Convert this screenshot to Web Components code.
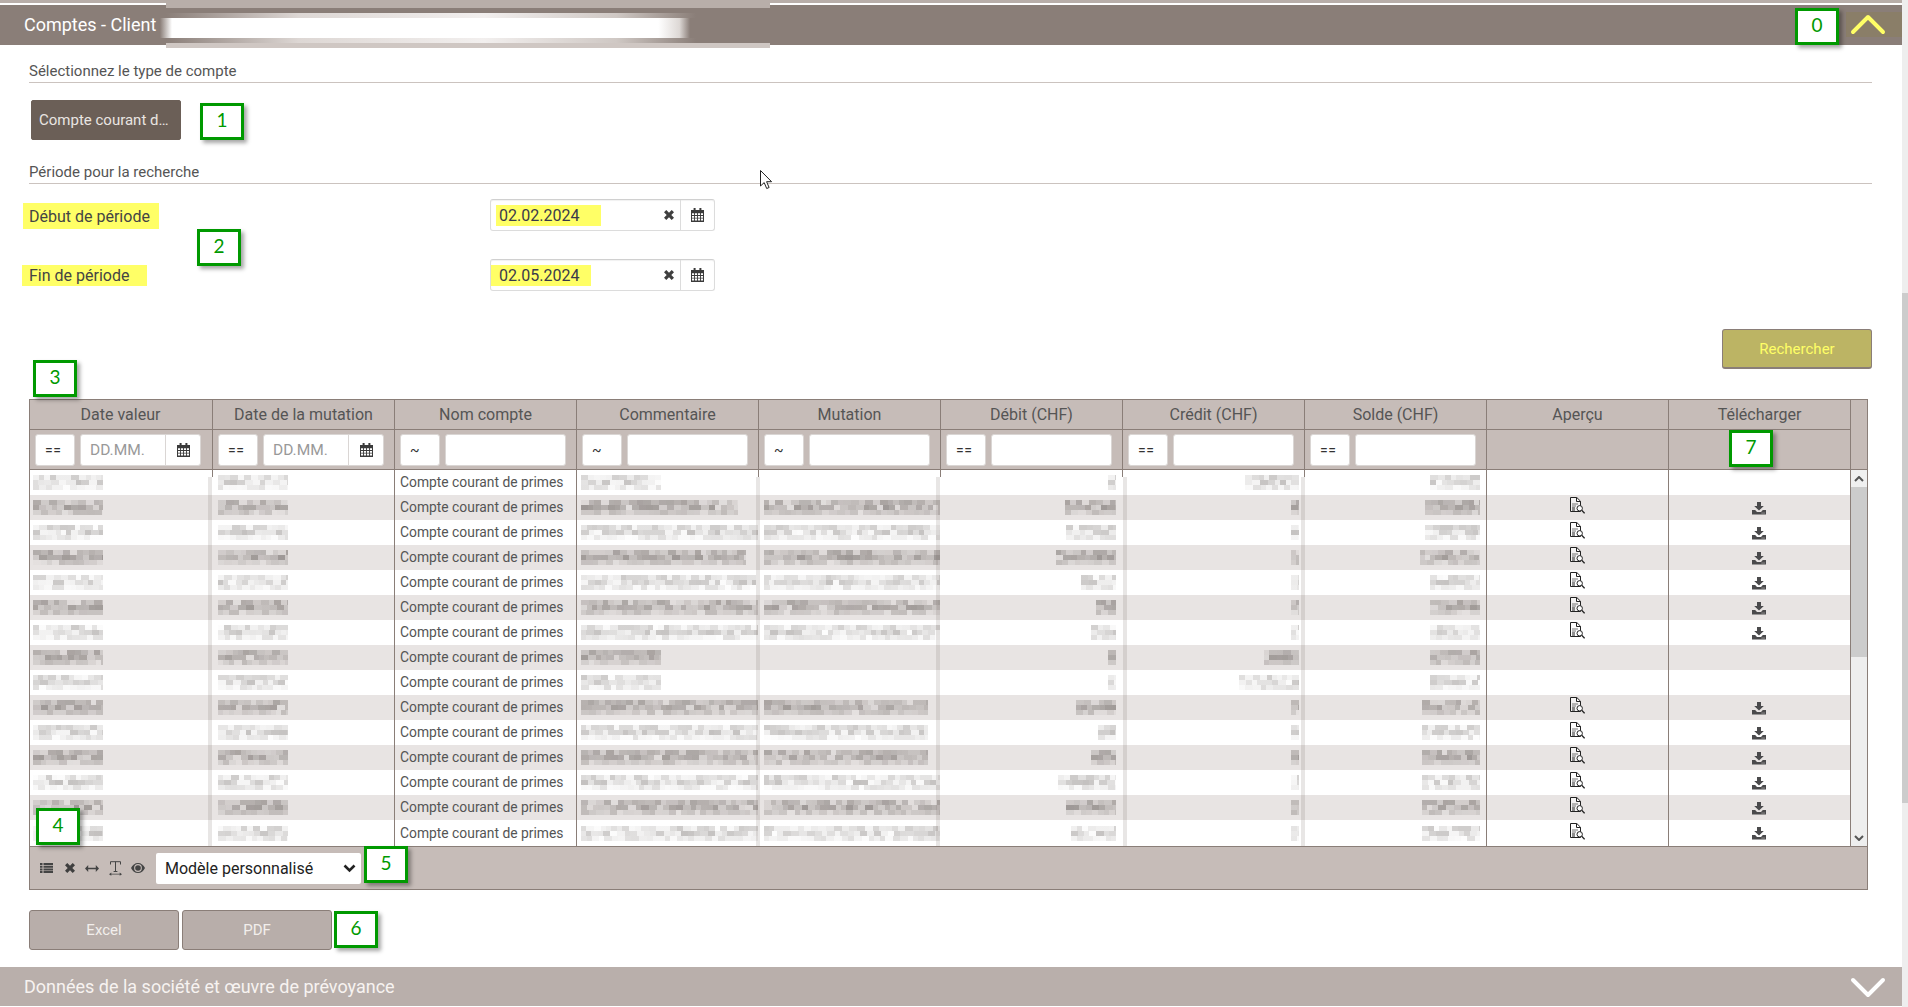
<!DOCTYPE html>
<html lang="fr">
<head>
<meta charset="utf-8">
<title>Comptes</title>
<style>
  html, body { margin: 0; padding: 0; height: 1007px; overflow: hidden; background: #fff; }
  body { font-family: Roboto, "Liberation Sans", sans-serif; color: #555; }
</style>
</head>
<body>
<app-shell></app-shell>
<script>
const ICONS = {
  cal: '<svg width="13" height="14" viewBox="0 0 13 14" style="display:block"><path fill="#3b3b3b" d="M2.6 0h2v2h3.8V0h2v2H13v12H0V2h2.6z"/><path fill="#fff" d="M1 5.3h2.1v1.7H1zM4 5.3h2.1v1.7H4zM7 5.3h2.1v1.7H7zM10 5.3h2v1.7h-2zM1 8h2.1v1.7H1zM4 8h2.1v1.7H4zM7 8h2.1v1.7H7zM10 8h2v1.7h-2zM1 10.6h2.1v1.9H1zM4 10.6h2.1v1.9H4zM7 10.6h2.1v1.9H7zM10 10.6h2v1.9h-2z"/></svg>',
  x: '<svg width="10" height="10" viewBox="0 0 10 10" style="display:block"><path fill="#3f3f3f" d="M0 2.3L2.3 0 5 2.7 7.7 0 10 2.3 7.3 5 10 7.7 7.7 10 5 7.3 2.3 10 0 7.7 2.7 5z"/></svg>',
  list: '<svg width="13" height="10" viewBox="0 0 13 10" style="display:block"><path fill="#444" d="M0 0h2.5v2H0zM3.5 0H13v2H3.5zM0 2.7h2.5v2H0zM3.5 2.7H13v2H3.5zM0 5.4h2.5v2H0zM3.5 5.4H13v2H3.5zM0 8h2.5v2H0zM3.5 8H13v2H3.5z"/></svg>',
  arrows: '<svg width="14" height="7" viewBox="0 0 14 7" style="display:block"><path fill="#444" d="M0 3.5L3.2 0v2.7h7.6V0L14 3.5 10.8 7V4.3H3.2V7z"/></svg>',
  textw: '<svg width="13" height="15" viewBox="0 0 13 15" style="display:block"><path fill="none" stroke="#444" d="M1.5 3.5V.7h10v2.8M6.5.7v9.6M4.6 10.5h3.8"/><path fill="#444" d="M0 13.2L2.3 11.6v1.2h8.4v-1.2L13 13.2l-2.3 1.6v-1.2H2.3v1.2z"/></svg>',
  eye: '<svg width="14" height="10" viewBox="0 0 14 10" style="display:block"><path fill="#444" d="M7 0c3 0 5.6 2 7 5-1.4 3-4 5-7 5S1.400 8 0 5c1.400-3 4-5 7-5z"/><circle cx="7" cy="5" r="3.900" fill="#c6bcb8"/><circle cx="7" cy="5" r="2.800" fill="#444"/></svg>',
  doc: '<svg width="15" height="17" viewBox="0 0 15 17" style="display:block"><path fill="#fff" fill-opacity=".55" stroke="#222" d="M.5.5h6.300l3.700 3.700v10.300H.5z"/><path fill="none" stroke="#222" d="M6.500.7v3.800h3.800"/><path stroke="#777" d="M2 7h6M2 9h4"/><path stroke="#222" d="M2 11h3M2 13h3"/><circle cx="9.700" cy="11.300" r="2.700" fill="#fff" stroke="#222"/><path stroke="#222" stroke-width="1.300" d="M11.700 13.300l2.900 3"/></svg>',
  save: '<svg width="14" height="13" viewBox="0 0 14 13" style="display:block"><path fill="#4a4a4c" d="M5 0h4v4h2.800L7 8.600 2.200 4H5zM0 8h3.200L5 10h4l1.800-2H14v4.500H0z"/><path fill="#a9a6a4" d="M9.300 10.700h3.700v.7H9.300z"/></svg>'
};

function make(name, css, html, build) {
  customElements.define(name, class extends HTMLElement {
    constructor() {
      super();
      this.attachShadow({ mode: 'open' });
    }
    connectedCallback() {
      if (this.shadowRoot.childNodes.length) return;
      const body = typeof html === 'function' ? html(this) : html;
      this.shadowRoot.innerHTML = '<style>' + css + '</style>' + body;
      if (build) build(this, this.shadowRoot);
    }
  });
}

/* pixelated redaction block */
function rng(seed) {
  let s = seed >>> 0;
  return () => { s = (s * 1664525 + 1013904223) >>> 0; return s / 4294967296; };
}
make('blur-text',
  ':host{display:inline-block;vertical-align:middle;height:15px;flex:none}' +
  '.r{height:5px}.w{filter:blur(.35px)}',
  el => {
    const w = +el.getAttribute('w');
    const r = rng((+el.getAttribute('s') || 1) * 7919);
    const dark = el.hasAttribute('dark');
    const rows = [];
    for (let y = 0; y < 3; y++) {
      const stops = [];
      let x = 0;
      while (x < w) {
        const b = Math.min(w - x, 5 + Math.floor(r() * 4));
        let a = dark ? .14 + r() * .32 : .05 + r() * .27;
        if (r() < .1) a *= .25;
        if (y === 2) a *= .55;
        if (y === 0) a *= .85;
        const col = 'rgba(70,62,58,' + a.toFixed(2) + ')';
        stops.push(col + ' ' + x + 'px ' + (x + b) + 'px');
        x += b;
      }
      rows.push('<div class="r" style="background:linear-gradient(90deg,' + stops.join(',') + ')"></div>');
    }
    return '<div class="w" style="width:' + w + 'px">' + rows.join('') + '</div>';
  });

/* annotation marker placed over the screenshot */
make('note-tag',
  ':host{position:absolute;box-sizing:border-box;width:44px;height:37px;background:#fff;border:3px solid #090;' +
  'box-shadow:3px 3px 4px rgba(0,0,0,.35);color:#090;font:19px/1 Lato,"Liberation Sans",sans-serif;' +
  'display:flex;align-items:center;justify-content:center;padding-bottom:5px;z-index:5}',
  '<slot></slot>');

/* collapsible section bar */
make('panel-bar',
  ':host{display:flex;align-items:center;height:40px;background:#8a7e78;color:#fff;font-size:18px;padding-left:24px;position:relative}' +
  ':host([closed]){background:#b9afab;color:#f7f3f1;height:39px}' +
  '.t{flex:1;padding-bottom:1px}' +
  '.c{box-sizing:border-box;width:56px;height:25px;padding-right:12px;align-self:flex-start;margin-top:7px;background:#8a7e68;display:flex;align-items:center;justify-content:center}' +
  ':host([closed]) .c{background:none;height:39px;margin:0}',
  el => el.hasAttribute('closed')
    ? '<span class="t"><slot></slot></span><span class="c"><svg width="36" height="22" viewBox="0 0 36 22"><path fill="none" stroke="#fff" stroke-width="4" stroke-linecap="round" stroke-linejoin="round" d="M3 4l15 15L33 4"/></svg></span>'
    : '<span class="t"><slot></slot></span><span class="c"><svg width="36" height="21" viewBox="0 0 36 21"><path fill="none" stroke="#ffff66" stroke-width="4" stroke-linecap="round" stroke-linejoin="round" d="M3 18L18 3l15 15"/></svg></span>');

make('section-title',
  ':host{display:flex;align-items:flex-end;box-sizing:border-box;margin:0 30px 0 29px;border-bottom:1px solid #cbc3bf;font-size:15px;line-height:22px;color:#555}',
  '<slot></slot>');

make('action-button',
  ':host{display:flex;align-items:center;justify-content:center;box-sizing:border-box;width:150px;height:40px;border-radius:3px;border:1px solid #8a7e78;background:#b8aeaa;color:#f2eeec;font-size:15px}' +
  ':host([kind=type]){background:#6b5f57;border-color:#6b5f57;color:#e9e5e2;justify-content:flex-start;padding-left:7px;border-radius:2px}' +
  ':host([kind=search]){background:#bcb464;border-width:1px 1px 2px 1px;color:#ffff66}',
  '<slot></slot>');

make('date-field',
  ':host{display:flex;align-items:center;box-sizing:border-box;width:225px;height:32px;border:1px solid #dcdcdc;border-top-color:#d0d0d0;border-radius:3px;box-shadow:inset 0 1px 1px rgba(0,0,0,.06);background:#fff;font-size:16px;color:#3a3a4a}' +
  '.v{flex:1;min-width:0;display:flex}' +
  '.h{display:block;box-sizing:border-box;background:#ffff66;height:21px;line-height:21px;margin-left:var(--ml);padding-left:var(--pl);width:var(--hw)}' +
  '.x{margin-right:6px}' +
  '.c{width:33px;align-self:stretch;border-left:1px solid #dcdcdc;display:flex;align-items:center;justify-content:center}',
  el => '<span class="v"><span class="h">' + el.getAttribute('value') + '</span></span><span class="x">' + ICONS.x + '</span><span class="c">' + ICONS.cal + '</span>');

make('filter-box',
  ':host{display:block;font-size:14px;height:32px}' +
  '.row{display:flex;gap:5px;height:32px}' +
  '.b{background:#fff;border:1px solid #dad6d4;border-radius:3px;box-sizing:border-box;height:32px;display:flex;align-items:center}' +
  '.op{width:40px;padding-left:9px;color:#333;letter-spacing:.5px}' +
  '.in{width:121px;padding-left:9px;color:#999;font-size:15.5px}' +
  '.p{flex:1}.c{width:34px;align-self:stretch;border-left:1px solid #dad6d4;display:flex;align-items:center;justify-content:center}',
  el => {
    const d = el.hasAttribute('date');
    return '<div class="row"><span class="b op">' + el.getAttribute('op') + '</span><span class="b in">' +
      (d ? '<span class="p">DD.MM.</span><span class="c">' + ICONS.cal + '</span>' : '') + '</span></div>';
  });

make('account-table',
  ':host{display:block;box-sizing:border-box;width:1839px;margin-left:29px;border:1px solid #8a7e78;background:#fff;font-size:13.85px;color:#555}' +
  '.g{position:relative;display:grid;grid-template-columns:repeat(10,182px) 17px;grid-template-rows:30px 40px repeat(14,25px) 26px}' +
  '.hd{background:#c6bcb8;border-bottom:1px solid #8a7e78;border-left:1px solid #8a7e78;font-size:16px;display:flex;align-items:center;justify-content:center;box-sizing:border-box;color:#555}' +
  '.fl{background:#c6bcb8;border-bottom:1px solid #8a7e78;border-left:1px solid #8a7e78;box-sizing:border-box;padding:4px 0 0 5px}' +
  '.first{border-left:0;padding-left:5px}' +
  '.hd.first{padding:0 1px 0 0}' +
  '.sc{grid-column:11;grid-row:1/span 2;background:#c6bcb8;border-left:1px solid #8a7e78;border-bottom:1px solid #8a7e78;box-sizing:border-box}' +
  '.td{box-sizing:border-box;overflow:hidden;display:flex;align-items:center;white-space:nowrap}' +
  '.alt{background:#e8e4e3}' +
  '.l{border-left:1px solid #8a7e78}' +
  '.bar{grid-column:11;grid-row:3/span 15;border-left:1px solid #8a7e78;box-sizing:border-box;background:#eee;display:flex;flex-direction:column}' +
  '.btn{height:17px;flex:none;background:#f0f0f0;display:flex;align-items:center;justify-content:center}' +
  '.th{height:170px;flex:none;background:#ccc}.sp{flex:1}' +
  '.ov{position:absolute;left:0;top:70px;width:1820px;height:376px;pointer-events:none;z-index:2}' +
  '.ov i{position:absolute;display:block}' +
  '.foot{border-top:1px solid #8a7e78;height:42px;background:#c6bcb8;display:flex;align-items:center;padding-left:10px;box-sizing:content-box}' +
  '.ic{display:flex;align-items:center;justify-content:center}' +
  '.sel{box-sizing:border-box;width:205px;height:31px;margin-left:11px;background:#fff;border-radius:2px;display:flex;align-items:center;justify-content:space-between;padding:0 5px 0 9px;font-size:16px;color:#222}',
  () => {
    const cols = ['Date valeur','Date de la mutation','Nom compte','Commentaire','Mutation','Débit (CHF)','Crédit (CHF)','Solde (CHF)','Aperçu','Télécharger'];
    const ops = ['==','==','~','~','~','==','==','=='];
    const rows = [
      [80,0,8,54,50,0],[157,176,51,8,55,1],[177,176,50,8,55,1],[165,176,60,8,60,1],[175,176,35,8,50,1],
      [177,176,20,8,50,1],[177,176,25,8,50,1],[80,0,8,35,50,0],[80,0,8,60,50,0],[177,164,40,8,58,1],
      [177,164,18,8,58,1],[177,164,25,8,58,1],[177,176,58,8,58,1],[177,176,50,8,58,1],[177,176,45,8,58,1]
    ];
    let h = '<div class="g">';
    cols.forEach((c, i) => { h += '<div class="hd' + (i ? '' : ' first') + '">' + c + '</div>'; });
    h += '<div class="sc"></div>';
    cols.forEach((c, i) => {
      h += '<div class="fl' + (i ? '' : ' first') + '">';
      if (i < 8) h += '<filter-box op="' + ops[i] + '"' + (i < 2 ? ' date' : '') + '></filter-box>';
      h += '</div>';
    });
    let s = 3;
    const blur = (w, dark) => w ? '<blur-text w="' + w + '" s="' + (s++) + '"' + (dark ? ' dark' : '') + '></blur-text>' : '';
    rows.forEach((r, n) => {
      const alt = n % 2 === 1, a = alt ? ' alt' : '', d = alt;
      h += '<div class="td' + a + '" style="padding-left:3px">' + blur(70, d) + '</div>';
      h += '<div class="td' + a + '" style="padding-left:6px">' + blur(70, d) + '</div>';
      h += '<div class="td l' + a + '" style="padding:0 0 1px 5px">Compte courant de primes</div>';
      h += '<div class="td l' + a + '" style="padding-left:4px">' + blur(r[0], d) + '</div>';
      h += '<div class="td' + a + '" style="padding-left:6px">' + blur(r[1], d) + '</div>';
      h += '<div class="td' + a + '" style="justify-content:flex-end;padding-right:6px">' + blur(r[2], d) + '</div>';
      h += '<div class="td' + a + '" style="justify-content:flex-end;padding-right:5px">' + blur(r[3], d) + '</div>';
      h += '<div class="td' + a + '" style="justify-content:flex-end;padding-right:6px">' + blur(r[4], d) + '</div>';
      h += '<div class="td l ic' + a + '" style="padding-bottom:4px">' + (r[5] ? ICONS.doc : '') + '</div>';
      h += '<div class="td l ic' + a + '" style="padding:1px 2px 0 0">' + (r[5] ? ICONS.save : '') + '</div>';
    });
    h += '<div class="bar"><div class="btn"><svg width="10" height="6" viewBox="0 0 10 6"><path fill="none" stroke="#555" stroke-width="2" d="M1 5l4-4 4 4"/></svg></div><div class="th"></div><div class="sp"></div><div class="btn" style="background:#eee"><svg width="10" height="6" viewBox="0 0 10 6"><path fill="none" stroke="#555" stroke-width="2" d="M1 1l4 4 4-4"/></svg></div></div>';
    h += '<div class="ov">';
    [[178,4],[726,4],[906,4],[1093,4],[1271,4]].forEach(p => {
      h += '<i style="left:' + p[0] + 'px;top:7px;bottom:0;width:' + p[1] + 'px;background:rgba(110,100,95,.16)"></i>';
    });
    [182,728,910,1092,1274].forEach(x => {
      h += '<i style="left:' + x + 'px;top:0;height:7px;width:1px;background:#8a7e78"></i>';
    });
    h += '</div></div>';
    h += '<div class="foot"><span>' + ICONS.list + '</span><span style="margin-left:12px">' + ICONS.x + '</span><span style="margin-left:10px">' + ICONS.arrows + '</span><span style="margin-left:10px">' + ICONS.textw + '</span><span style="margin-left:9px">' + ICONS.eye + '</span>' +
      '<span class="sel">Modèle personnalisé<svg width="13" height="9" viewBox="0 0 13 9"><path fill="none" stroke="#222" stroke-width="2.600" d="M1.500 1.500l5 5 5-5"/></svg></span></div>';
    return h;
  });

make('app-shell',
  ':host{display:flex;height:1007px;width:1908px;overflow:hidden;position:relative;background:#fff}' +
  '.main{width:1902px;flex:none;display:flex;flex-direction:column;position:relative}' +
  '.main>*{flex:none}' +
  '.scroll{width:6px;flex:none;background:#eee}' +
  '.thumb{height:510px;margin-top:293px;background:#ccc}' +
  '.strip{height:3px;background:#b8aea9}' +
  '.gap{height:2px}' +
  '.row{display:flex;align-items:center;height:32px;margin-left:29px;font-size:16px;color:#444}' +
  '.lab{width:461px;flex:none;display:flex}' +
  '.hl{display:block;box-sizing:border-box;background:#ffff66}' +
  '.red{position:absolute;pointer-events:none}' +
  '.cursor{position:absolute;left:760px;top:170px;z-index:6}',
  `<div class="main">
     <div class="strip"></div><div class="gap"></div>
     <panel-bar>Comptes - Client</panel-bar>
     <section-title style="height:38px">Sélectionnez le type de compte</section-title>
     <action-button kind="type" style="margin:17px 0 0 31px">Compte courant d…</action-button>
     <section-title style="height:44px">Période pour la recherche</section-title>
     <div class="row" style="margin-top:15px">
       <span class="lab"><span class="hl" style="width:136px;height:26px;line-height:27px;margin:1px 0 0 -6px;padding-left:6px">Début de période</span></span>
       <date-field value="02.02.2024" style="--ml:5px;--pl:3px;--hw:105px"></date-field>
     </div>
     <div class="row" style="margin-top:28px">
       <span class="lab"><span class="hl" style="width:125px;height:21px;line-height:21px;margin-left:-7px;padding-left:7px">Fin de période</span></span>
       <date-field value="02.05.2024" style="--ml:0px;--pl:8px;--hw:100px"></date-field>
     </div>
     <action-button kind="search" style="margin:38px 30px 0 auto;width:150px">Rechercher</action-button>
     <account-table style="margin-top:30px"></account-table>
     <div style="display:flex;gap:3px;margin:20px 0 0 29px">
       <action-button>Excel</action-button>
       <action-button>PDF</action-button>
     </div>
     <panel-bar closed style="margin-top:17px">Données de la société et œuvre de prévoyance</panel-bar>

     <div class="red" style="left:166px;top:0;width:604px;height:8px;background:#b8aea9"></div>
     <div class="red" style="left:166px;top:43px;width:604px;height:5px;background:#cfc7c3"></div>
     <div class="red" style="left:166px;top:13px;width:530px;height:5px;background:linear-gradient(90deg,#8a7e78,#ddd7d4 25%,#f2efee 60%,#cfc8c4 85%,#8a7e78)"></div>
     <div class="red" style="left:166px;top:38px;width:530px;height:5px;background:linear-gradient(90deg,#8a7e78,#ddd7d4 25%,#f2efee 60%,#cfc8c4 85%,#8a7e78)"></div>
     <div class="red" style="left:160px;top:18px;width:530px;height:20px;background:linear-gradient(90deg,#8a7e78,#fff 12px,#fff 94%,#ddd8d5 98%,#8a7e78)"></div>

     <note-tag style="left:1795px;top:8px">0</note-tag>
     <note-tag style="left:200px;top:103px">1</note-tag>
     <note-tag style="left:197px;top:229px">2</note-tag>
     <note-tag style="left:33px;top:360px">3</note-tag>
     <note-tag style="left:36px;top:808px">4</note-tag>
     <note-tag style="left:364px;top:846px">5</note-tag>
     <note-tag style="left:334px;top:911px">6</note-tag>
     <note-tag style="left:1729px;top:430px">7</note-tag>

     <svg class="cursor" width="13" height="20" viewBox="0 0 13 20"><path fill="#fff" stroke="#222" stroke-width="1" d="M.5.5v15.500l3.700-3.400 2.500 5.900 2.400-1-2.500-5.800h5z"/></svg>
   </div>
   <div class="scroll"><div class="thumb"></div></div>`);
</script>
</body>
</html>
